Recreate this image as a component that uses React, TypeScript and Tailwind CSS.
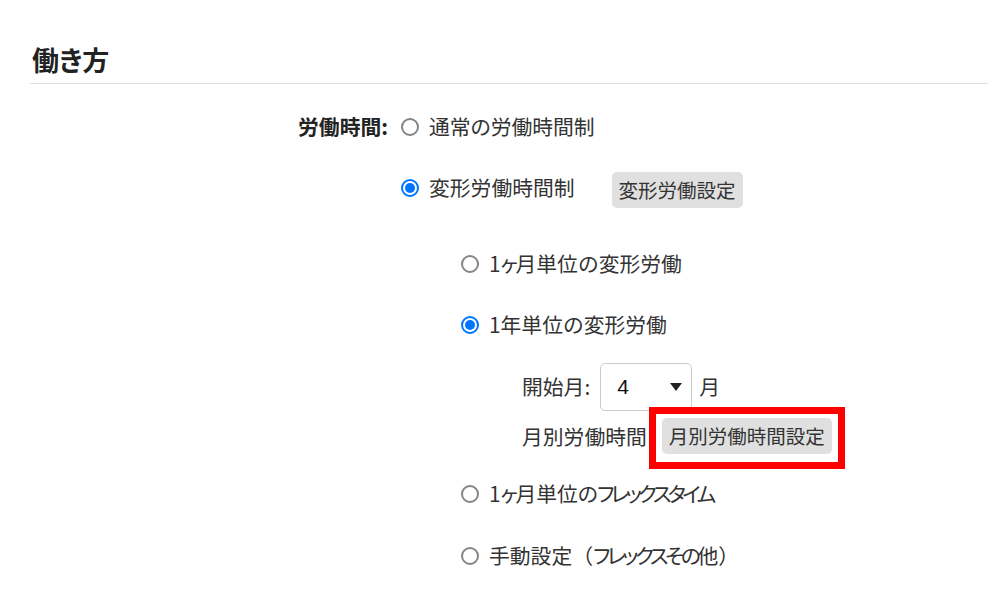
import React from 'react';

const font = { fontFamily: '"Noto Sans CJK JP", "Noto Sans", sans-serif' };

// proportional kana, squeezed to the narrow katakana of the original
const Kana: React.FC<{ children: React.ReactNode; tight?: string }> = ({ children, tight = '0px' }) => (
  <span style={{ fontFeatureSettings: '"palt"', letterSpacing: tight }}>{children}</span>
);

const Radio: React.FC<{ checked?: boolean }> = ({ checked }) =>
  checked ? (
    <span className="inline-flex h-[18px] w-[18px] shrink-0 items-center justify-center rounded-full border-2 border-[#0075ff] bg-white">
      <span className="h-[10px] w-[10px] rounded-full bg-[#0075ff]" />
    </span>
  ) : (
    <span className="inline-block h-[18px] w-[18px] shrink-0 rounded-full border-2 border-[#858585] bg-white" />
  );

const Option: React.FC<{ checked?: boolean; className?: string; children: React.ReactNode; extra?: React.ReactNode }> = ({
  checked,
  className = '',
  children,
  extra,
}) => (
  <div className={`flex items-center ${className}`}>
    <Radio checked={checked} />
    <span className="ml-[10px] whitespace-nowrap">{children}</span>
    {extra}
  </div>
);

const GrayButton: React.FC<{ label: string; className?: string }> = ({ label, className = '' }) => (
  <button className={`rounded-[5px] bg-[#e0e0e0] px-[7px] text-[19.5px] leading-[36px] text-[#333] ${className}`}>
    {label}
  </button>
);

export default function App() {
  return (
    <div className="h-[615px] w-[988px] overflow-hidden bg-white text-[20.8px] text-[#333]" style={font}>
      <div className="pl-[30px] pt-[40px]">
        <h2 className="pl-[2px] text-[27px] font-bold leading-[40px] text-[#222]">
          働<Kana>き</Kana>方
        </h2>
        <div className="mt-[3px] border-b border-[#dddddd]" />
      </div>

      <div className="mt-[23px] flex">
        <div className="flex h-[40px] w-[390px] items-center justify-end pr-[2px] font-bold text-[#222]">
          労働時間:
        </div>
        <div className="ml-[11px] flex flex-col">
          <Option className="h-[40px]">
            通常<Kana>の</Kana>労働時間制
          </Option>
          <Option checked className="mt-[21px] h-[40px]" extra={<GrayButton label="変形労働設定" className="ml-[37px] mt-[4px]" />}>
            変形労働時間制
          </Option>

          <div className="ml-[60px] flex flex-col">
            <Option className="mt-[36px] h-[40px]">
              1<Kana tight="-2px">ヶ</Kana>月単位の変形労働
            </Option>
            <Option checked className="mt-[21px] h-[40px]">
              1年単位の変形労働
            </Option>

            <div className="ml-[61px] flex flex-col">
              <div className="mt-[18px] flex h-[48px] items-center">
                <span className="whitespace-nowrap">開始月:</span>
                <div className="ml-[10px] flex h-[48px] w-[92px] items-center justify-between rounded-[5px] border border-[#cccccc] bg-white pl-[16px] pr-[9px] text-[#111]">
                  <span className="text-[21px]" style={{ fontFamily: '"Liberation Sans", Arial, sans-serif' }}>
                    4
                  </span>
                  <svg width="12" height="8" viewBox="0 0 12 8">
                    <path d="M0 0 H12 L6 8 Z" fill="#222" />
                  </svg>
                </div>
                <span className="ml-[7px]">月</span>
              </div>
              <div className="mt-[1px] flex h-[50px] items-center">
                <span className="whitespace-nowrap">月別労働時間</span>
                <div className="ml-[2px] mt-[1px] border-[7px] border-[#ff0000] px-[6px] pt-[4px] pb-[8px]">
                  <GrayButton label="月別労働時間設定" />
                </div>
              </div>
            </div>

            <Option className="mt-[12px] h-[40px]">
              1<Kana tight="-2px">ヶ</Kana>月単位<Kana tight="-1px">の</Kana>
              <Kana tight="-3.6px">フレックスタイム</Kana>
            </Option>
            <Option className="mt-[22px] h-[40px]">
              手動設定（<Kana tight="-3.3px">フレックスその</Kana>他）
            </Option>
          </div>
        </div>
      </div>
    </div>
  );
}
